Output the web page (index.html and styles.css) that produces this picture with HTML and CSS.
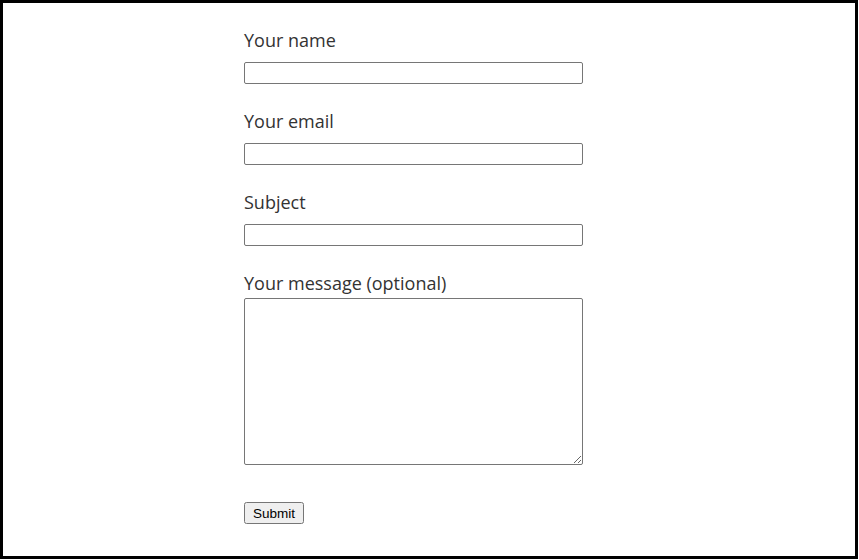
FILE: index.html
```html
<!DOCTYPE html>
<html>
<head>
    <link rel="stylesheet" href="styles.css">
</head>
<body>
    <div class="frame">
        <form class="contact-form">
            <p>
                <label>Your name<br>
                    <input type="text" class="field">
                </label>
            </p>
            <p>
                <label>Your email<br>
                    <input type="email" class="field">
                </label>
            </p>
            <p>
                <label>Subject<br>
                    <input type="text" class="field">
                </label>
            </p>
            <p>
                <label>Your message (optional)<br>
                    <textarea class="message"></textarea>
                </label>
            </p>
            <p>
                <input type="submit" value="Submit" class="submit">
            </p>
        </form>
    </div>
</body>
</html>
```

FILE: styles.css
```css
body {
    margin: 0;
    background: #fff;
}
.frame {
    box-sizing: border-box;
    width: 858px;
    height: 559px;
    border: 3px solid #000;
    padding: 25px 0 0 241px;
}
.contact-form {
    font-family: "Open Sans", sans-serif;
    font-size: 18px;
    color: #333;
}
.contact-form p {
    margin: 0 0 25px 0;
    line-height: 24px;
}
.field {
    box-sizing: border-box;
    width: 339px;
    height: 22px;
    margin-top: 10px;
    border: 1px solid #767676;
    border-radius: 2px;
    padding: 1px 2px;
    font-size: 13.33px;
}
.message {
    box-sizing: border-box;
    display: block;
    width: 339px;
    height: 167px;
    margin-top: 3px;
    border: 1px solid #767676;
    border-radius: 2px;
}
.submit {
    box-sizing: border-box;
    height: 22px;
    margin-top: 12px;
    padding: 1px 7px;
    font-family: Arial, "Liberation Sans", sans-serif;
    font-size: 13.5px;
}
```
